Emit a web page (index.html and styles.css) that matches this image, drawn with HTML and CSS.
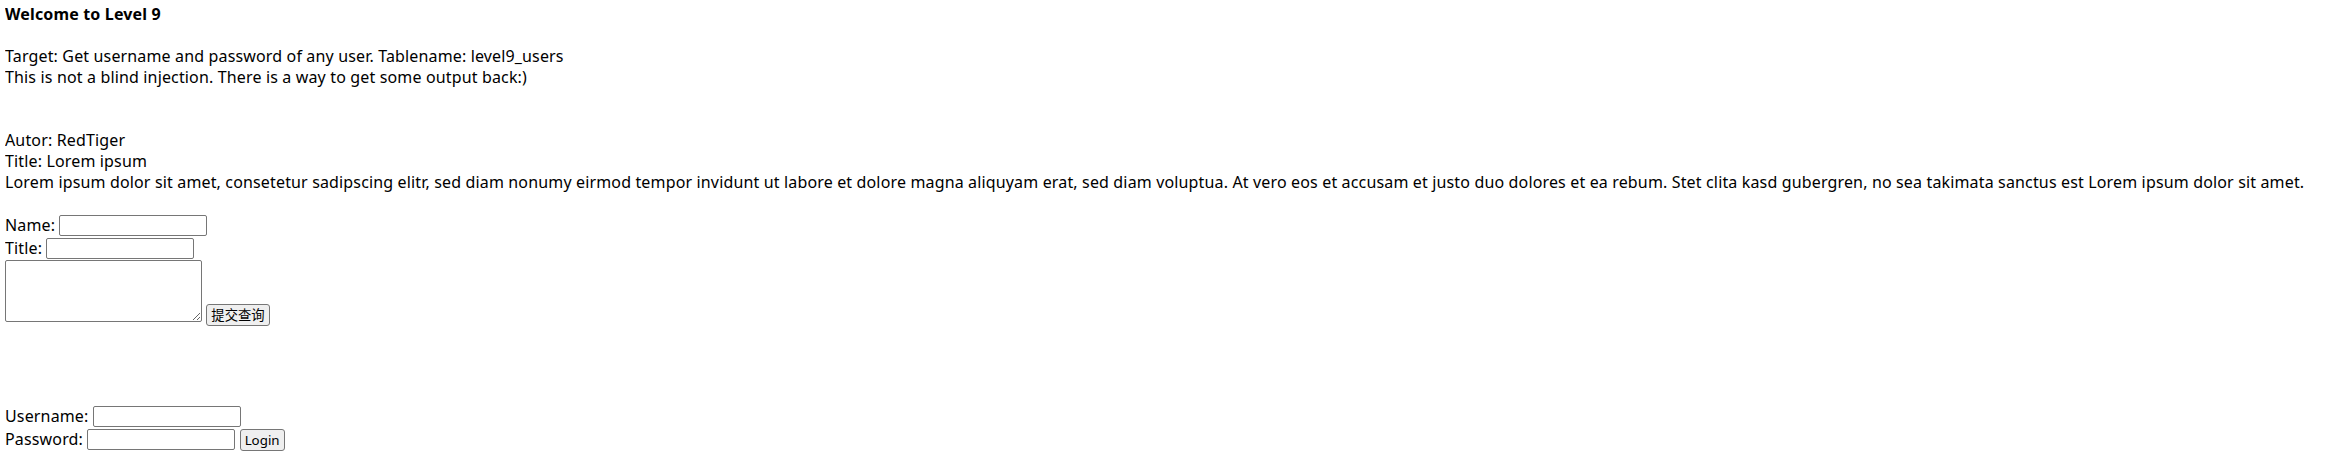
FILE: index.html
```html
<!DOCTYPE html>
<html lang="en">
<head>
<meta charset="utf-8">
<title>Level 9</title>
<link rel="stylesheet" href="styles.css">
</head>
<body>
<div class="intro">
<b class="title">Welcome to Level 9</b><br><br>
Target: Get username and password of any user. Tablename: level9_users<br>
This is not a blind injection. There is a way to get some output back:)<br><br><br>
Autor: RedTiger<br>
Title: Lorem ipsum<br>
Lorem ipsum dolor sit amet, consetetur sadipscing elitr, sed diam nonumy eirmod tempor invidunt ut labore et dolore magna aliquyam erat, sed diam voluptua. At vero eos et accusam et justo duo dolores et ea rebum. Stet clita kasd gubergren, no sea takimata sanctus est Lorem ipsum dolor sit amet.<br><br>
</div>
<form class="entry-form">
Name: <input class="field" type="text" name="autor"><br>
Title: <input class="field" type="text" name="title"><br>
<textarea class="textbox" name="text"></textarea> <input class="btn btn-query" type="submit" value="提交查询">
</form>
<form class="login-form">
Username: <input class="field" type="text" name="user"><br>
Password: <input class="field" type="password" name="password"> <input class="btn" type="submit" value="Login">
</form>
</body>
</html>
```
FILE: styles.css
```css
body {
  margin: 4px 5px;
  font-family: "Noto Sans", "Noto Sans CJK SC", sans-serif;
  font-size: 16px;
  line-height: 21px;
  letter-spacing: 0.15px;
  color: #000;
  background: #fff;
}

.title {
  font-weight: bold;
}

.entry-form {
  margin: 0 0 78px 0;
}

.login-form {
  margin: 0;
}

.field {
  box-sizing: border-box;
  width: 148px;
  height: 21px;
  margin: 1px 0;
  padding: 1px 2px;
  border: 1px solid #767676;
  border-radius: 2px;
  font-family: "Noto Sans", "Noto Sans CJK SC", sans-serif;
  font-size: 13.33px;
  letter-spacing: 0;
  background: #fff;
}

.textbox {
  box-sizing: border-box;
  width: 197px;
  height: 62px;
  margin: 0;
  padding: 2px;
  border: 1px solid #767676;
  border-radius: 2px;
  font-family: "Liberation Mono", monospace;
  font-size: 13.33px;
  resize: both;
  vertical-align: baseline;
}

.btn {
  box-sizing: border-box;
  height: 22px;
  margin: 0;
  padding: 0 4px;
  border: 1px solid #767676;
  border-radius: 3px;
  background: #efefef;
  color: #000;
  font-family: "Noto Sans", "Noto Sans CJK SC", sans-serif;
  font-size: 13.33px;
  letter-spacing: 0;
  line-height: 18px;
}

.btn-query {
  vertical-align: 2px;
}
```
